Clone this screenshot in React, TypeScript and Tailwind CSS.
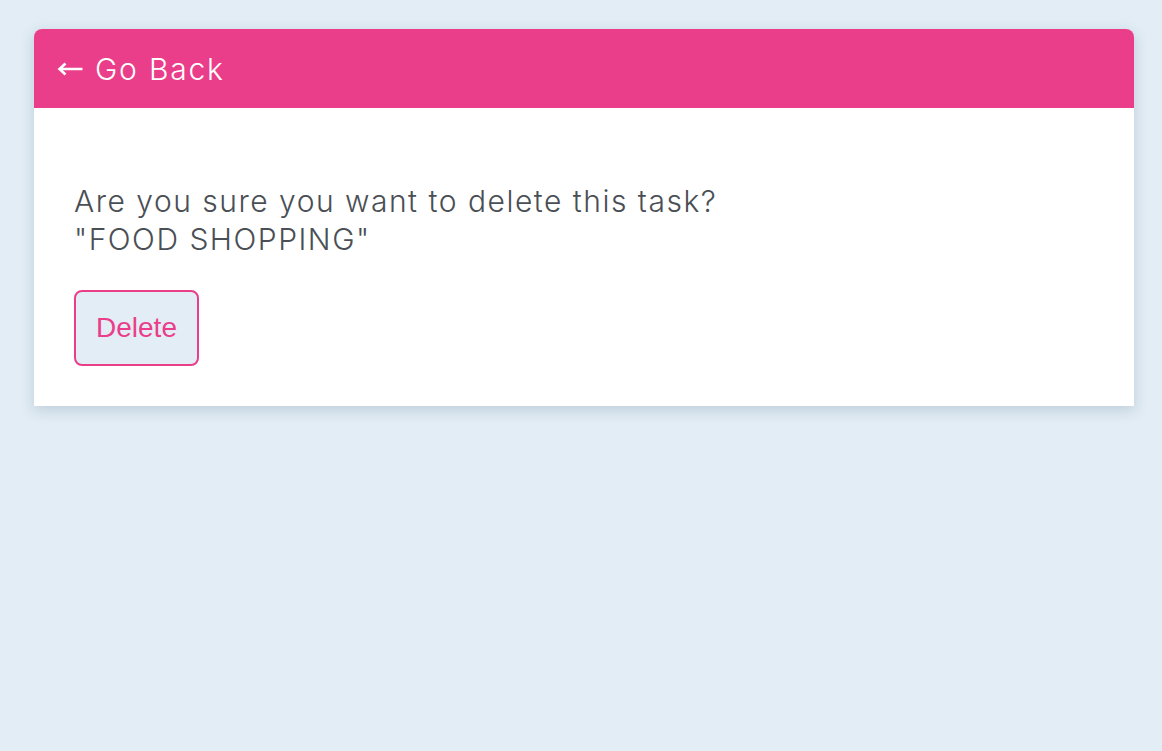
export default function App() {
  return (
    <div className="min-h-[751px] w-full bg-[#e2edf5] pl-[34px] pr-[28px] pt-[29px] font-['Inter',sans-serif]">
      <div className="overflow-hidden rounded-t-lg bg-white shadow-[0_4px_14px_rgba(80,110,140,0.25)]">
        <div className="flex h-[79px] items-center bg-[#ea3e8a] px-[23px] text-white">
          <button className="flex items-center gap-[12px] text-[30px] font-light leading-none tracking-[0.06em]">
            <svg width="26" height="16" viewBox="0 0 26 16" fill="none">
              <path d="M25.5 8H3M8.5 2.5L2.5 8L8.5 13.5" stroke="white" strokeWidth="2.6" />
            </svg>
            <span>Go Back</span>
          </button>
        </div>
        <div className="px-10 pt-[74px] pb-10">
          <p className="text-[30px] font-light leading-[38px] tracking-[0.05em] text-[#4a4f55]">
            Are you sure you want to delete this task?
            <br />
            "FOOD SHOPPING"
          </p>
          <button className="mt-[32px] h-[76px] w-[125px] rounded-lg border-2 border-[#ea3e8a] bg-[#e3edf5] font-['Liberation_Sans',sans-serif] text-[28px] text-[#ea3e8a]">
            Delete
          </button>
        </div>
      </div>
    </div>
  );
}
